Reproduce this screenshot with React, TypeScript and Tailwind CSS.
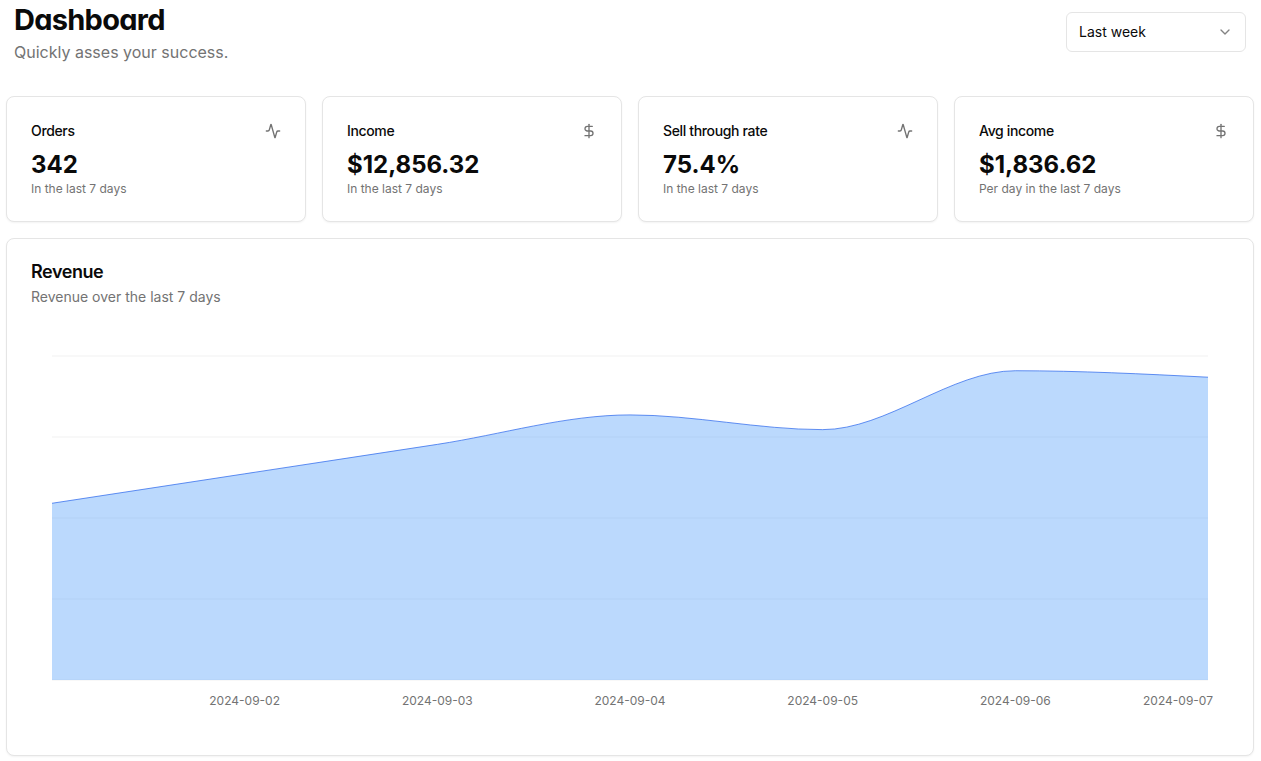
import { useState } from "react";
import { Activity, ChevronDown, DollarSign, type LucideIcon } from "lucide-react";

interface StatCardProps {
    title: string;
    value: string;
    description: string;
    icon: LucideIcon;
}

interface RevenuePoint {
    date: string;
    revenue: number;
}

const stats: StatCardProps[] = [
    { title: "Orders", value: "342", description: "In the last 7 days", icon: Activity },
    { title: "Income", value: "$12,856.32", description: "In the last 7 days", icon: DollarSign },
    { title: "Sell through rate", value: "75.4%", description: "In the last 7 days", icon: Activity },
    { title: "Avg income", value: "$1,836.62", description: "Per day in the last 7 days", icon: DollarSign },
];

const revenue: RevenuePoint[] = [
    { date: "2024-09-01", revenue: 1200 },
    { date: "2024-09-02", revenue: 1400 },
    { date: "2024-09-03", revenue: 1600 },
    { date: "2024-09-04", revenue: 1800 },
    { date: "2024-09-05", revenue: 1700 },
    { date: "2024-09-06", revenue: 2100 },
    { date: "2024-09-07", revenue: 2056 },
];

const CHART_WIDTH = 1156;
const CHART_HEIGHT = 324;
const MAX_REVENUE = 2200;
const gridLines = [0, 81, 162, 243, 324];

// Monotone cubic interpolation, so the curve never overshoots a data point
const monotonePath = (values: number[]) => {
    const step = CHART_WIDTH / (values.length - 1);
    const ys = values.map((v) => CHART_HEIGHT - (v / MAX_REVENUE) * CHART_HEIGHT);
    const slopes = ys.slice(1).map((y, i) => (y - ys[i]) / step);
    const last = ys.length - 1;

    const tangents = ys.map((_, i) => {
        if (i === 0 || i === last) return 0;
        const a = slopes[i - 1];
        const b = slopes[i];
        if (a * b <= 0) return 0;
        return Math.sign(a) * 2 * Math.min(Math.abs(a), Math.abs(b), Math.abs(a + b) / 4);
    });
    tangents[0] = (3 * slopes[0] - tangents[1]) / 2;
    tangents[last] = (3 * slopes[last - 1] - tangents[last - 1]) / 2;

    return ys.slice(1).reduce((path, y, i) => {
        const x0 = i * step;
        const x1 = x0 + step;
        const third = step / 3;
        return `${path}C${x0 + third},${ys[i] + tangents[i] * third},${x1 - third},${y - tangents[i + 1] * third},${x1},${y}`;
    }, `M0,${ys[0]}`);
};

const StatCard = ({ title, value, description, icon: Icon }: StatCardProps) => {
    return (
        <article className="rounded-lg border border-neutral-200 bg-white p-6 shadow-xs">
            <div className="flex items-center justify-between pb-2">
                <h3 className="text-sm font-medium tracking-tight">{title}</h3>
                <Icon className="h-4 w-4 text-neutral-500" aria-hidden="true" />
            </div>
            <p className="text-2xl font-bold">{value}</p>
            <p className="text-xs text-neutral-500">{description}</p>
        </article>
    );
};

const RevenueChart = () => {
    const line = monotonePath(revenue.map((point) => point.revenue));

    return (
        <div>
            <svg
                className="block h-[324px] w-full overflow-visible"
                viewBox={`0 0 ${CHART_WIDTH} ${CHART_HEIGHT}`}
                preserveAspectRatio="none"
                aria-hidden="true"
            >
                {gridLines.map((y) => (
                    <line key={y} x1={0} x2={CHART_WIDTH} y1={y} y2={y} stroke="#e5e5e5" strokeOpacity={0.5} />
                ))}
                <path d={`${line}V${CHART_HEIGHT}H0Z`} fill="#5aa2fb" fillOpacity={0.41} />
                <path d={line} fill="none" stroke="#2563eb" strokeWidth={1} strokeOpacity={0.7} vectorEffect="non-scaling-stroke" />
            </svg>
            {/* two columns per day, so that each label is centred under its point */}
            <div className="grid grid-cols-12 pt-[13px] text-center text-xs text-neutral-500">
                {revenue.slice(1, -1).map((point) => (
                    <span key={point.date} className="col-span-2 first:col-start-2">
                        {point.date}
                    </span>
                ))}
                <span className="-mr-[5px] flex justify-end whitespace-nowrap">{revenue[revenue.length - 1].date}</span>
            </div>
        </div>
    );
};

const App = () => {
    const [range, setRange] = useState("week");

    return (
        <main className="bg-white pb-1 pl-1.5 pr-[7px] font-['Inter',sans-serif] text-neutral-950">
            <header className="flex items-start justify-between px-2 pb-8 pt-0.5">
                <div className="flex flex-col gap-0.5">
                    <h1 className="text-[29px] font-bold leading-9 tracking-tight [font-feature-settings:'cv11']">Dashboard</h1>
                    <p className="text-base text-neutral-500">Quickly asses your success.</p>
                </div>
                <div className="relative mt-2.5 w-[180px]">
                    <select
                        aria-label="Period"
                        value={range}
                        onChange={(e) => setRange(e.target.value)}
                        className="h-10 w-full appearance-none rounded-md border border-neutral-200 bg-white px-3 text-sm"
                    >
                        <option value="week">Last week</option>
                        <option value="month">Last month</option>
                        <option value="year">Last year</option>
                    </select>
                    <ChevronDown className="pointer-events-none absolute right-[13px] top-3 h-4 w-4 opacity-50" aria-hidden="true" />
                </div>
            </header>

            <div className="flex flex-col gap-4">
                <section className="grid grid-cols-4 gap-4">
                    {stats.map((stat) => (
                        <StatCard key={stat.title} {...stat} />
                    ))}
                </section>

                <section className="rounded-lg border border-neutral-200 bg-white shadow-xs">
                    <div className="flex flex-col gap-1.5 p-6">
                        <h2 className="text-lg font-semibold leading-none tracking-tight">Revenue</h2>
                        <p className="text-sm text-neutral-500">Revenue over the last 7 days</p>
                    </div>
                    <div className="px-[45px] pb-[46px] pt-[25px]">
                        <RevenueChart />
                    </div>
                </section>
            </div>
        </main>
    );
};

export default App;
